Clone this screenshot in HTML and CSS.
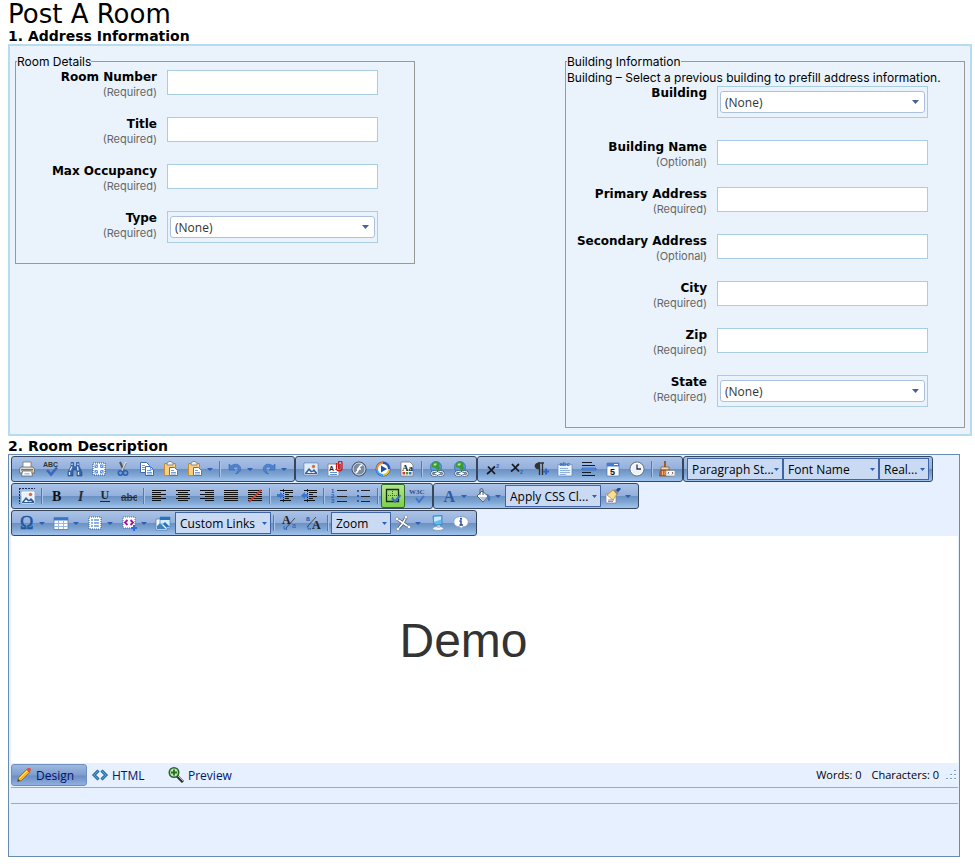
FILE: index.html
```html
<!DOCTYPE html>
<html lang="en">
<head>
<meta charset="utf-8">
<title>Post A Room</title>
<link rel="stylesheet" href="styles.css">
</head>
<body>
<svg class="sprite" aria-hidden="true">
  <symbol id="print" viewBox="0 0 16 16"><path d="M4 1h8v6H4z" fill="#fff" stroke="#777" stroke-width=".8"/><path d="M2 6h12l1.500 2v4H.5V8z" fill="#d9d9d6" stroke="#666" stroke-width=".8"/><path d="M2 8h12v1.500H2z" fill="#777"/><path d="M3.500 10h9l1 5h-11z" fill="#fff" stroke="#666" stroke-width=".8"/><path d="M5.500 12h5v1.500h-5z" fill="#9fc4ea"/><path d="M12 10.500h2" stroke="#e5a521" stroke-width="1.500"/></symbol>
  <symbol id="spell" viewBox="0 0 16 16"><text x="0" y="5.500" font-family="Liberation Sans" font-size="7" font-weight="700" fill="#333">ABC</text><path d="M4 9l4 4.500 6-7" fill="none" stroke="#3c66bd" stroke-width="2.500"/></symbol>
  <symbol id="find" viewBox="0 0 16 16"><path d="M4 1.500h2.500V5L8 6l1.500-1V1.500H12V5l3 6v4h-5V9H6v6H1v-4l3-6z" fill="#3566ad" stroke="#234a86" stroke-width=".6"/><path d="M3 9.500L5 5.500M11 9.500l-.5-4M2.500 11v3M11.500 11v3M5 2.500v1.500M11 2.500v1.500" stroke="#dcebff" stroke-width="1.300"/></symbol>
  <symbol id="selectall" viewBox="0 0 16 16"><path d="M2 2h12v12H2z" fill="#fff" stroke="#1e4e97" stroke-dasharray="1 1"/><path d="M3.500 3.500h3.500v3.500H3.500zM9 3.500h3.500v3.500H9zM3.500 9h3.500v3.500H3.500zM9 9h3.500v3.500H9z" fill="#5f94df"/><path d="M4.500 4.500l2 2M11.500 4.500l-2 2M4.500 11.500l2-2M11.500 11.500l-2-2" stroke="#cfe2fa"/></symbol>
  <symbol id="cut" viewBox="0 0 16 16"><path d="M5 1l4 9" stroke="#555" stroke-width="2"/><path d="M11 1L7 10" stroke="#d8dce5" stroke-width="1.800"/><path d="M11.500 2L8 9" stroke="#666" stroke-width=".7"/><circle cx="5.500" cy="12" r="2.200" fill="none" stroke="#2e5fb0" stroke-width="1.500"/><circle cx="10.500" cy="12" r="2.200" fill="none" stroke="#2e5fb0" stroke-width="1.500"/></symbol>
  <symbol id="copy" viewBox="0 0 16 16"><path d="M1.500 1.500h6l3 3v7h-9z" fill="#fff" stroke="#3d68b5"/><path d="M3 4.500h3M3 6.500h3M3 8.500h3" stroke="#6e9be0"/><path d="M6.500 5.500h5l3 3v6h-8z" fill="#fff" stroke="#3d68b5"/><path d="M11.500 5.500v3h3M8 9.500h4M8 11.500h5M8 13h5" fill="none" stroke="#6e9be0"/></symbol>
  <symbol id="paste" viewBox="0 0 16 16"><path d="M1.500 2.500h11v12h-11z" fill="#f6cf85" stroke="#c98a34"/><path d="M4 4V2l2-1.500h2L10 2v2z" fill="#eee" stroke="#777" stroke-width=".8"/><path d="M6.500 6.500h5l3 3v5h-8z" fill="#fff" stroke="#56779c"/><path d="M8 9.500h3M8 11.500h5M8 13h5" stroke="#7ea0cc"/></symbol>
  <symbol id="undo" viewBox="0 0 16 16"><path d="M2 3v6h6L6 7c3-2 6-.5 5 2.500C10.500 11 9.500 12 8.500 13 12 12.500 14.500 9.500 13.500 6.500 12.500 3 7.500 2 4 5z" fill="#4e83d1" stroke="#3466b5" stroke-width=".6"/></symbol>
  <symbol id="image" viewBox="0 0 16 16"><path d="M1 2h14v12H1z" fill="#fff" stroke="#6383b3" stroke-width=".8"/><path d="M2 3h12v10H2z" fill="#ddecfb"/><path d="M2 12l4-5 3 3 2-2 3 3.500V13H2z" fill="#375f9c"/><path d="M4 12l2-2.500 2 2 3-1 1 1.500z" fill="#f4f8ff"/><circle cx="10.500" cy="5.500" r="1.700" fill="#e86b2a"/></symbol>
  <symbol id="attach" viewBox="0 0 16 16"><path d="M1 3h11v12H1z" fill="#fff" stroke="#889"/><text x="2" y="10" font-family="Liberation Sans" font-size="7" font-weight="700" fill="#222">A</text><path d="M3 11.500h7M3 13.500h7M8 8.500h2" stroke="#5f90d4"/><path d="M9.500 2v5.500c0 3 5.500 3 5.500 0V2c0-2.500-3.500-2.500-3.500 0v5c0 1 1.500 1 1.500 0V3" fill="none" stroke="#cf1717" stroke-width="1.300"/></symbol>
  <symbol id="flash" viewBox="0 0 16 16"><circle cx="8" cy="8" r="7" fill="#7d8ba0" stroke="#39465a"/><circle cx="8" cy="8" r="6" fill="none" stroke="#d5dce8"/><path d="M11.500 4c-5-.5-3 7.500-7 8M6 8h4" fill="none" stroke="#fff" stroke-width="1.600"/></symbol>
  <symbol id="media" viewBox="0 0 16 16"><circle cx="8" cy="8" r="7.500" fill="#2b54b2"/><path d="M8 1A7 7 0 0 0 1 8h3a4 4 0 0 1 4-4z" fill="#ef8a35"/><path d="M15 8a7 7 0 0 1-7 7v-3a4 4 0 0 0 4-4z" fill="#e7c72d"/><path d="M1 8a7 7 0 0 0 7 7v-3a4 4 0 0 1-4-4z" fill="#42a7ea"/><circle cx="8" cy="8" r="5" fill="#fff"/><path d="M6 4.500L12 8l-6 3.500z" fill="#234da8"/></symbol>
  <symbol id="template" viewBox="0 0 16 16"><path d="M2 1h9l3 3v11H2z" fill="#fff" stroke="#777" stroke-width=".8"/><text x="3" y="9.500" font-family="Liberation Serif" font-size="9" font-weight="700" fill="#222">Aa</text><path d="M3.500 11h2.500v2.500H3.500z" fill="#d23535"/><path d="M6.800 11h2.500v2.500H6.800z" fill="#3aa143"/><path d="M10 11h2.500v2.500H10z" fill="#3567c9"/></symbol>
  <symbol id="link" viewBox="0 0 16 16"><circle cx="7" cy="6" r="5.500" fill="#5b9be0" stroke="#2c66a5" stroke-width=".7"/><path d="M3 2.500C5 .5 9 .5 11 2.500L10 5l1.500 2L8.500 11 6.500 7 3 6z" fill="#3b9a38"/><path d="M5 2.500h3L7 4.500H4.500z" fill="#b9ec92"/><rect x="2.500" y="10.500" width="6" height="4" rx="2" fill="none" stroke="#4d5b6d" stroke-width="2"/><rect x="8.500" y="10.500" width="6" height="4" rx="2" fill="none" stroke="#4d5b6d" stroke-width="2"/><rect x="2.500" y="10.500" width="6" height="4" rx="2" fill="none" stroke="#fff"/><rect x="8.500" y="10.500" width="6" height="4" rx="2" fill="none" stroke="#fff"/><path d="M6 12.500h5" stroke="#fff" stroke-width="1.200"/></symbol>
  <symbol id="sup" viewBox="0 0 16 16"><path d="M3 5.500l7 7.500M10 5.500C7 8 6 10 2 13" fill="none" stroke="#171b22" stroke-width="1.800"/><text x="11" y="6.500" font-family="Liberation Sans" font-size="6" font-weight="700" fill="#2861bd">2</text></symbol>
  <symbol id="sub" viewBox="0 0 16 16"><path d="M3 3l7 7.500M10 3C7 5.500 6 8 2 10.500" fill="none" stroke="#171b22" stroke-width="1.800"/><text x="11" y="13" font-family="Liberation Sans" font-size="5" font-weight="700" fill="#2861bd">2</text></symbol>
  <symbol id="para" viewBox="0 0 16 16"><path d="M5 2h6M6.500 2v12M9.500 2v12" stroke="#333" stroke-width="1.300"/><path d="M6.500 1.500v7C0 8.500 0 1.500 6.500 1.500" fill="#333"/><path d="M10 10.500h6M13 7.500v6" stroke="#2e67c9" stroke-width="2"/></symbol>
  <symbol id="abcbox" viewBox="0 0 16 16"><path d="M1 3.500h14v11.500H1z" fill="#edf4ff" stroke="#6084bd" stroke-width=".7"/><text x="2.500" y="5" font-family="Liberation Sans" font-size="6" font-weight="700" fill="#295fac">abc</text><path d="M3 7.500h8M3 9.500h10M3 11.500h10M3 13.500h6" stroke="#8eb0e0"/></symbol>
  <symbol id="hr" viewBox="0 0 16 16"><path d="M1 1.500h10M1 4.500h13M1 11.500h9M1 14.500h13" stroke="#171b22"/><path d="M1 7h14v2H1z" fill="#5f95ed" stroke="#2d62b5" stroke-width=".7"/></symbol>
  <symbol id="date" viewBox="0 0 16 16"><path d="M2 2h12v13H2z" fill="#fff" stroke="#5276ab" stroke-width=".7"/><path d="M2 2h12v3.500H2z" fill="#427bd0"/><path d="M9 3.500h4" stroke="#fff"/><text x="5" y="13.500" font-family="Liberation Sans" font-size="9" font-weight="700" fill="#111">5</text></symbol>
  <symbol id="clock" viewBox="0 0 16 16"><circle cx="8" cy="8" r="7" fill="#edf2f8" stroke="#626c7b"/><circle cx="8" cy="8" r="5.800" fill="none" stroke="#fff"/><path d="M8 3.500V8h4" fill="none" stroke="#2c374b" stroke-width="1.300"/></symbol>
  <symbol id="clean" viewBox="0 0 16 16"><path d="M5 0h2v6H5z" fill="#a65826"/><path d="M2 6h8v3H2z" fill="#f3d9ae" stroke="#935122" stroke-width=".7"/><path d="M1.500 9h9l1 6H.5z" fill="#bb673a" stroke="#833e1e" stroke-width=".7"/><path d="M3.500 10v4M6 10v4M8 10v4" stroke="#efb878"/><path d="M7 9.500h9V15H7z" fill="#fff" stroke="#888" stroke-width=".7"/><path d="M10 11l-1 1.200 1 1.200M13 11l1 1.200-1 1.200" fill="none" stroke="#333" stroke-width=".8"/></symbol>
  <symbol id="manager" viewBox="0 0 16 16"><path d="M0 .5h16M.5 0v16" stroke="#14305f" stroke-dasharray="2 1"/><path d="M3 4h12v11H3z" fill="#e5f1fe" stroke="#fff"/><path d="M3 14l4-5 3 3 2-2 3 3v2H3z" fill="#345b9a"/><path d="M5 14l2-2.500 2 2 3-.5 1 1z" fill="#f4f8ff"/><circle cx="11.500" cy="6.500" r="1.700" fill="#e86b2a"/></symbol>
  <symbol id="bold" viewBox="0 0 16 16"><text x="3" y="12.500" font-family="Liberation Serif" font-size="14" font-weight="700" fill="#111">B</text></symbol>
  <symbol id="italic" viewBox="0 0 16 16"><text x="5" y="12.500" font-family="Liberation Serif" font-size="14" font-style="italic" font-weight="700" fill="#292d36">I</text></symbol>
  <symbol id="underline" viewBox="0 0 16 16"><text x="3.500" y="11" font-family="Liberation Serif" font-size="12" font-weight="700" fill="#202631">U</text><path d="M3 13.500h10" stroke="#202631"/></symbol>
  <symbol id="strike" viewBox="0 0 16 16"><text x="0" y="13" font-family="Liberation Sans" font-size="10" font-weight="700" fill="#3a4149">abc</text><path d="M0 9.500h16" stroke="#252b34"/></symbol>
  <symbol id="left" viewBox="0 0 16 16"><path d="M1 2.500h14M1 4.500h9M1 6.500h14M1 8.500h9M1 10.500h14M1 12.500h9" stroke="#111"/></symbol>
  <symbol id="center" viewBox="0 0 16 16"><path d="M1 2.500h14M3 4.500h10M1 6.500h14M3 8.500h10M1 10.500h14M3 12.500h10" stroke="#111"/></symbol>
  <symbol id="right" viewBox="0 0 16 16"><path d="M1 2.500h14M6 4.500h9M1 6.500h14M6 8.500h9M1 10.500h14M6 12.500h9" stroke="#111"/></symbol>
  <symbol id="justify" viewBox="0 0 16 16"><path d="M1 2.500h14M1 4.500h14M1 6.500h14M1 8.500h14M1 10.500h14M1 12.500h14" stroke="#111"/></symbol>
  <symbol id="noalign" viewBox="0 0 16 16"><path d="M1 2.500h14M1 4.500h14M1 6.500h14M1 8.500h14M1 10.500h14M1 12.500h14" stroke="#111"/><path d="M2 14L14 2" stroke="#e43622" stroke-width="1.800"/></symbol>
  <symbol id="indent" viewBox="0 0 16 16"><path d="M3 2.500h13M8 4.500h8M8 6.500h4M8 8.500h8M8 10.500h4M3 12.500h11" stroke="#111"/><path d="M6.500 1v14" stroke="#222" stroke-dasharray="1 1"/><path d="M0 6h3V4l4 3.500L3 11V9H0z" fill="#3a75cd"/></symbol>
  <symbol id="outdent" viewBox="0 0 16 16"><path d="M3 2.500h13M8 4.500h8M8 6.500h4M8 8.500h8M8 10.500h4M3 12.500h11" stroke="#111"/><path d="M6.500 1v14" stroke="#222" stroke-dasharray="1 1"/><path d="M7 6H4V4L0 7.500 4 11V9h3z" fill="#3a75cd"/></symbol>
  <symbol id="ol" viewBox="0 0 16 16"><path d="M6 2.500h10M6 8.500h10M6 13.500h10" stroke="#222"/><text font-family="Liberation Sans" font-size="6" font-weight="700" fill="#285fb7"><tspan x="0" y="5">1</tspan><tspan x="0" y="10">2</tspan><tspan x="0" y="15">3</tspan></text></symbol>
  <symbol id="ul" viewBox="0 0 16 16"><path d="M6 2.500h9M6 8.500h9M6 13.500h9" stroke="#222"/><path d="M2 2h2v2H2zM2 7h2v2H2zM2 12h2v2H2z" fill="#285fb7"/></symbol>
  <symbol id="border" viewBox="0 0 16 16"><path d="M1.500 1.500h12v12h-12z" fill="none" stroke="#172d17" stroke-width="1.300"/><path d="M7.500 3v10M3 7.500h10" stroke="#385c32" stroke-dasharray="1 1"/><path d="M7 10l3 3.500L15.500 7" fill="none" stroke="#406ec1" stroke-width="2.200"/></symbol>
  <symbol id="w3c" viewBox="0 0 16 16"><text x="0" y="6" font-family="Liberation Serif" font-size="7" font-weight="700" fill="#294d8b">W3C</text><path d="M7 10l3 4 5-6" fill="none" stroke="#4275cd" stroke-width="2"/></symbol>
  <symbol id="color" viewBox="0 0 16 16"><text x="2.500" y="13.500" font-family="Liberation Serif" font-size="16" font-weight="700" fill="#2c5baa">A</text></symbol>
  <symbol id="bucket" viewBox="0 0 16 16"><path d="M2 8l5-5 6 5-5 6z" fill="#fff" stroke="#4f5f79"/><path d="M4 9h8l-4 4z" fill="#b9c6da"/><path d="M5 7V2c0-2 3-2 3 0v5" fill="none" stroke="#4f5f79"/><path d="M12 6c4 1 4 7 2 7s-1-4-2-7" fill="#3a76d1"/></symbol>
  <symbol id="format" viewBox="0 0 16 16"><path d="M1 6h10v9H1z" fill="#fff" stroke="#879" stroke-width=".7"/><path d="M3 12h6M3 13.500h5" stroke="#88a"/><path d="M2 7l6-5 4 4-4 6z" fill="#f7df91" stroke="#b97d27" stroke-width=".7"/><path d="M8 2l3-1 3 3-2 3z" fill="#888d9a"/><path d="M12 3l3-3" stroke="#244f98" stroke-width="3"/></symbol>
  <symbol id="omega" viewBox="0 0 16 16"><text x="1" y="14" font-family="Liberation Serif" font-size="18" fill="#2254a0" stroke="#2254a0" stroke-width=".5">Ω</text></symbol>
  <symbol id="table" viewBox="0 0 16 16"><path d="M1 2.500h14v12H1z" fill="#fff" stroke="#5579af" stroke-width=".8"/><path d="M1 2.500h14v3H1z" fill="#3976ca"/><path d="M1 8.500h14M1 11.500h14M5.500 5v9M10.500 5v9" stroke="#9bb9e2"/></symbol>
  <symbol id="formlist" viewBox="0 0 16 16"><path d="M2 2h12v12H2z" fill="#fff" stroke="#315f9f" stroke-dasharray="1 1"/><path d="M4 5h2M4 8h2M4 11h2M7 5h5M7 8h5M7 11h5" stroke="#6699d4" stroke-width="1.500"/></symbol>
  <symbol id="snippet" viewBox="0 0 16 16"><path d="M2 2h12v11H2z" fill="#fff" stroke="#416eaa" stroke-dasharray="1 1"/><path d="M6.500 5L4 7.500 6.500 10M9.500 5L12 7.500 9.500 10" fill="none" stroke="#a0149a" stroke-width="1.800"/><path d="M10 13h6M13 10v6" stroke="#2f6cd2" stroke-width="2"/></symbol>
  <symbol id="map" viewBox="0 0 16 16"><path d="M1 4h11v11H1z" fill="#f5fbff" stroke="#567eae" stroke-width=".8"/><path d="M2 11l3-3 6 6H2z" fill="#3e83bf"/><path d="M5 2h10v11h-3l-3-4H5z" fill="#d5eeff" stroke="#568ac3" stroke-width=".8"/><path d="M5 2h10v3H5zM8 9l2-2 5 5H11z" fill="#2874bc"/></symbol>
  <symbol id="lower" viewBox="0 0 16 16"><text x="1" y="9" font-family="Liberation Serif" font-size="12" font-weight="700" fill="#222">A</text><text x="11" y="13" font-family="Liberation Sans" font-size="7" fill="#285fb7">a</text><path d="M5 13L14 3" stroke="#333" stroke-width=".8"/><path d="M3 11v3h3l-1-1M5 15l1-1" fill="none" stroke="#3567b5"/></symbol>
  <symbol id="upper" viewBox="0 0 16 16"><text x="1" y="6" font-family="Liberation Sans" font-size="7" font-weight="700" fill="#285fb7">a</text><text x="7" y="14" font-family="Liberation Serif" font-size="12" font-weight="700" fill="#222">A</text><path d="M2 12L11 2" stroke="#333" stroke-width=".8"/><path d="M3 11v3h3l-1-1" fill="none" stroke="#3567b5"/></symbol>
  <symbol id="modules" viewBox="0 0 16 16"><path d="M2 4l6 4 3-6M8 8l-5 6M8 8l6 4" fill="none" stroke="#4d596b" stroke-width="3"/><path d="M2 4l6 4 3-6M8 8l-5 6M8 8l6 4" fill="none" stroke="#fff" stroke-width="1.600"/><g fill="#f7f9ff" stroke="#66748a" stroke-width=".5"><circle cx="2" cy="4" r="1.700"/><circle cx="11" cy="2" r="1.700"/><circle cx="3" cy="14" r="1.700"/><circle cx="14" cy="12" r="1.700"/></g></symbol>
  <symbol id="screen" viewBox="0 0 16 16"><ellipse cx="9" cy="13.500" rx="5.500" ry="2" fill="#f2f6fa" stroke="#7892aa" stroke-width=".7"/><path d="M8 9h3v4H8z" fill="#b8ccdd"/><path d="M4 1l9-.5v9L5 10z" fill="#62bdee" stroke="#327dba" stroke-width=".8"/><path d="M5 2l7-.5v3L5 7z" fill="#c5eafc"/></symbol>
  <symbol id="about" viewBox="0 0 16 16"><path d="M8 1.500c9.500 0 9.500 10.500 1.500 10.500L8 15l-1-3C-1.500 12-1.500 1.500 8 1.500" fill="#fff" stroke="#8aa0be"/><path d="M6.500 6H8v4M6.500 10h3.500" fill="none" stroke="#1f4894" stroke-width="1.400"/><circle cx="8" cy="3.800" r="1.100" fill="#1f4894"/></symbol>
  <symbol id="pencil" viewBox="0 0 16 16"><path d="M1.500 14.500l1-4 8-8 3 3-8 8z" fill="#f5b72c" stroke="#8b5a17" stroke-width=".7"/><path d="M3.500 11.500l8-8" stroke="#ffe584"/><path d="M10.500 2.500l1.500-1.500h2l1 1-.5 2-1 1.500z" fill="#df4e49"/><path d="M1.500 14.500l.7-2.500 1.800 1.800z" fill="#443b30"/></symbol>
  <symbol id="code" viewBox="0 0 16 16"><path d="M6.500 3.500L2 8l4.500 4.500M9.500 3.500L14 8l-4.500 4.500" fill="none" stroke="#174f80" stroke-width="3"/><path d="M6.500 3.500L2 8l4.500 4.500M9.500 3.500L14 8l-4.500 4.500" fill="none" stroke="#4ba6df" stroke-width="1.300"/></symbol>
  <symbol id="zoomin" viewBox="0 0 16 16"><path d="M9 9l6 6" stroke="#2b3135" stroke-width="3"/><path d="M10 9l5 5" stroke="#b5b8bb"/><circle cx="6" cy="5.500" r="4.700" fill="#c0e8b0" stroke="#27632b" stroke-width="1.600"/><path d="M3 5.500h6M6 2.500v6" stroke="#246f29" stroke-width="1.800"/></symbol>
</svg>

<h1 class="page-title">Post A Room</h1>

<h2 class="section-title">1. Address Information</h2>
<form class="address">
  <fieldset class="group">
    <legend>Room Details</legend>
    <div class="field"><label for="room-number">Room Number <small>(Required)</small></label><input type="text" id="room-number"></div>
    <div class="field"><label for="title">Title <small>(Required)</small></label><input type="text" id="title"></div>
    <div class="field"><label for="occupancy">Max Occupancy <small>(Required)</small></label><input type="text" id="occupancy"></div>
    <div class="field"><label for="type">Type <small>(Required)</small></label><div class="picker"><select id="type"><option>(None)</option></select></div></div>
  </fieldset>
  <fieldset class="group">
    <legend>Building Information</legend>
    <p class="hint">Building – Select a previous building to prefill address information.</p>
    <div class="field"><label for="building">Building</label><div class="picker"><select id="building"><option>(None)</option></select></div></div>
    <div class="field"><label for="building-name">Building Name <small>(Optional)</small></label><input type="text" id="building-name"></div>
    <div class="field"><label for="primary">Primary Address <small>(Required)</small></label><input type="text" id="primary"></div>
    <div class="field"><label for="secondary">Secondary Address <small>(Optional)</small></label><input type="text" id="secondary"></div>
    <div class="field"><label for="city">City <small>(Required)</small></label><input type="text" id="city"></div>
    <div class="field"><label for="zip">Zip <small>(Required)</small></label><input type="text" id="zip"></div>
    <div class="field"><label for="state">State <small>(Required)</small></label><div class="picker"><select id="state"><option>(None)</option></select></div></div>
  </fieldset>
</form>

<h2 class="section-title">2. Room Description</h2>
<section class="editor">
  <div class="toolbars">
    <div class="toolrow">
      <div class="toolbar">
        <button class="tool" aria-label="Print"><svg><use href="#print"/></svg></button>
        <button class="tool" aria-label="Spell check"><svg><use href="#spell"/></svg></button>
        <button class="tool" aria-label="Find"><svg><use href="#find"/></svg></button>
        <button class="tool" aria-label="Select all"><svg><use href="#selectall"/></svg></button>
        <button class="tool" aria-label="Cut"><svg><use href="#cut"/></svg></button>
        <button class="tool" aria-label="Copy"><svg><use href="#copy"/></svg></button>
        <button class="tool" aria-label="Paste"><svg><use href="#paste"/></svg></button>
        <button class="tool split" aria-label="Paste options"><svg><use href="#paste"/></svg></button>
        <span class="sep"></span>
        <button class="tool split" aria-label="Undo"><svg><use href="#undo"/></svg></button>
        <button class="tool split" aria-label="Redo"><svg class="flip"><use href="#undo"/></svg></button>
      </div>
      <div class="toolbar">
        <button class="tool" aria-label="Image"><svg><use href="#image"/></svg></button>
        <button class="tool" aria-label="Document"><svg><use href="#attach"/></svg></button>
        <button class="tool" aria-label="Flash"><svg><use href="#flash"/></svg></button>
        <button class="tool" aria-label="Media"><svg><use href="#media"/></svg></button>
        <button class="tool" aria-label="Template"><svg><use href="#template"/></svg></button>
        <span class="sep"></span>
        <button class="tool" aria-label="Link"><svg><use href="#link"/></svg></button>
        <button class="tool" aria-label="Remove link"><svg><use href="#link"/></svg></button>
      </div>
      <div class="toolbar">
        <button class="tool" aria-label="Superscript"><svg><use href="#sup"/></svg></button>
        <button class="tool" aria-label="Subscript"><svg><use href="#sub"/></svg></button>
        <button class="tool" aria-label="New paragraph"><svg><use href="#para"/></svg></button>
        <button class="tool" aria-label="Group box"><svg><use href="#abcbox"/></svg></button>
        <button class="tool" aria-label="Horizontal rule"><svg><use href="#hr"/></svg></button>
        <button class="tool" aria-label="Date"><svg><use href="#date"/></svg></button>
        <button class="tool" aria-label="Time"><svg><use href="#clock"/></svg></button>
        <span class="sep"></span>
        <button class="tool" aria-label="Strip formatting"><svg><use href="#clean"/></svg></button>
      </div>
      <div class="toolbar">
        <select class="combo" aria-label="Paragraph style"><option>Paragraph St...</option></select>
        <select class="combo" aria-label="Font name"><option>Font Name</option></select>
        <select class="combo combo-small" aria-label="Font size"><option>Real...</option></select>
      </div>
    </div>
    <div class="toolrow">
      <div class="toolbar">
        <button class="tool" aria-label="Absolute position"><svg><use href="#manager"/></svg></button>
        <span class="sep"></span>
        <button class="tool" aria-label="Bold"><svg><use href="#bold"/></svg></button>
        <button class="tool" aria-label="Italic"><svg><use href="#italic"/></svg></button>
        <button class="tool" aria-label="Underline"><svg><use href="#underline"/></svg></button>
        <button class="tool" aria-label="Strikethrough"><svg><use href="#strike"/></svg></button>
        <span class="sep"></span>
        <button class="tool" aria-label="Align left"><svg><use href="#left"/></svg></button>
        <button class="tool" aria-label="Align center"><svg><use href="#center"/></svg></button>
        <button class="tool" aria-label="Align right"><svg><use href="#right"/></svg></button>
        <button class="tool" aria-label="Justify"><svg><use href="#justify"/></svg></button>
        <button class="tool" aria-label="Remove alignment"><svg><use href="#noalign"/></svg></button>
        <span class="sep"></span>
        <button class="tool" aria-label="Indent"><svg><use href="#indent"/></svg></button>
        <button class="tool" aria-label="Outdent"><svg><use href="#outdent"/></svg></button>
        <span class="sep"></span>
        <button class="tool" aria-label="Numbered list"><svg><use href="#ol"/></svg></button>
        <button class="tool" aria-label="Bullet list"><svg><use href="#ul"/></svg></button>
        <span class="sep"></span>
        <button class="tool tool-on" aria-label="Show table borders" aria-pressed="true"><svg><use href="#border"/></svg></button>
        <button class="tool" aria-label="Validate"><svg><use href="#w3c"/></svg></button>
      </div>
      <div class="toolbar">
        <button class="tool split" aria-label="Text color"><svg><use href="#color"/></svg></button>
        <button class="tool split" aria-label="Background color"><svg><use href="#bucket"/></svg></button>
        <select class="combo" aria-label="CSS class"><option>Apply CSS Cl...</option></select>
        <button class="tool split" aria-label="Format painter"><svg><use href="#format"/></svg></button>
      </div>
    </div>
    <div class="toolrow">
      <div class="toolbar">
        <button class="tool split" aria-label="Symbol"><svg><use href="#omega"/></svg></button>
        <button class="tool split" aria-label="Table"><svg><use href="#table"/></svg></button>
        <button class="tool split" aria-label="Form element"><svg><use href="#formlist"/></svg></button>
        <button class="tool split" aria-label="Code snippet"><svg><use href="#snippet"/></svg></button>
        <button class="tool" aria-label="Image map"><svg><use href="#map"/></svg></button>
        <select class="combo" aria-label="Custom links"><option>Custom Links</option></select>
        <span class="sep"></span>
        <button class="tool" aria-label="Lower case"><svg><use href="#lower"/></svg></button>
        <button class="tool" aria-label="Upper case"><svg><use href="#upper"/></svg></button>
        <span class="sep"></span>
        <select class="combo combo-medium" aria-label="Zoom"><option>Zoom</option></select>
        <button class="tool split" aria-label="Modules"><svg><use href="#modules"/></svg></button>
        <button class="tool" aria-label="Full screen"><svg><use href="#screen"/></svg></button>
        <button class="tool" aria-label="About"><svg><use href="#about"/></svg></button>
      </div>
    </div>
  </div>
  <div class="canvas"><span>Demo</span></div>
  <div class="status">
    <button class="mode mode-on"><svg><use href="#pencil"/></svg>Design</button>
    <button class="mode"><svg><use href="#code"/></svg>HTML</button>
    <button class="mode"><svg><use href="#zoomin"/></svg>Preview</button>
    <p class="counts"><span>Words: 0</span><span>Characters: 0</span></p>
    <svg class="grip" viewBox="0 0 12 12" aria-hidden="true"><path d="M9 1h2v2H9zM5 5h2v2H5zM9 5h2v2H9zM1 9h2v2H1zM5 9h2v2H5zM9 9h2v2H9z" fill="#fff"/><path d="M9 1h2v1H9zM5 5h2v1H5zM9 5h2v1H9zM1 9h2v1H1zM5 9h2v1H5zM9 9h2v1H9z" fill="#7f9bc9"/></svg>
  </div>
  <div class="path"></div>
</section>
</body>
</html>
```
FILE: styles.css
```css
* { box-sizing: border-box; }

body {
  margin: 0 3px 0 8px;
  background: #fff;
  color: #000;
  font-family: "DejaVu Sans", sans-serif;
  font-size: 12px;
  line-height: 16px;
}

.sprite { display: none; }

.page-title {
  margin: 0;
  font-size: 26px;
  font-weight: 400;
  line-height: 28px;
}

.section-title {
  margin: 0;
  font-size: 14px;
  font-weight: 700;
  line-height: 16px;
}

.address {
  display: flex;
  justify-content: space-between;
  align-items: flex-start;
  margin-bottom: 2px;
  padding: 6px 5px;
  background: #eaf3fb;
  border: 2px solid #b5dcf1;
}

.group {
  flex: 0 1 400px;
  min-width: 0;
  margin: 0;
  padding: 0 1px;
  border: 1px solid #999;
}

.group legend {
  padding: 2px 0 0;
}

.group legend,
.hint {
  font-family: "Inter", sans-serif;
}

.hint { margin: 0; }

.field {
  display: flex;
  align-items: flex-start;
  gap: 10px;
  padding-right: 35px;
}

.field label {
  flex: 1;
  font-weight: 700;
  line-height: 15px;
  text-align: right;
}

.field small {
  display: block;
  color: #666;
  font-family: "Inter", sans-serif;
  font-size: 11px;
  font-weight: 400;
}

.field input,
.picker {
  width: 211px;
  margin-bottom: 22px;
  border: 1px solid #a9cde2;
}

.field input {
  height: 25px;
  padding: 0 4px;
  background: #fff;
}

.picker {
  height: 32px;
  padding: 4px 2px;
}

.field:last-child .picker { margin-bottom: 20px; }

select,
button {
  margin: 0;
  font-family: "Open Sans", sans-serif;
  font-size: 12px;
}

select {
  appearance: none;
  background-repeat: no-repeat;
}

.picker select {
  display: block;
  width: 100%;
  height: 22px;
  padding: 0 4px;
  border: 1px solid #abc1de;
  border-radius: 3px;
  background-color: #fff;
  background-image: url("data:image/svg+xml,%3Csvg xmlns='http://www.w3.org/2000/svg' width='7' height='4'%3E%3Cpath d='M0 0h7L3.5 4z' fill='%234a5fa0'/%3E%3C/svg%3E");
  background-position: right 5px center;
  color: #333;
}

.editor {
  margin-right: 12px;
  padding: 1px 1px 52px 2px;
  background: #e7f0ff;
  border: 1px solid #688caf;
}

.toolbars {
  display: flex;
  flex-direction: column;
  gap: 1px;
}

.toolrow { display: flex; }

.toolbar {
  display: flex;
  align-items: center;
  height: 26px;
  padding: 0 3px;
  border: 1px solid #36465e;
  border-radius: 3px;
  background: linear-gradient(#abc3e6 0, #94b0dc 48%, #6b92c3 52%, #7fa5d2 75%, #a0c4ee 100%);
}

.tool {
  display: flex;
  align-items: center;
  justify-content: center;
  width: 24px;
  height: 22px;
  padding: 0;
  border: 0;
  background: none;
}

.tool svg {
  flex: none;
  width: 16px;
  height: 16px;
}

.tool .flip { transform: scaleX(-1); }

.split {
  justify-content: flex-start;
  width: 34px;
  padding-left: 4px;
}

.split::after {
  content: "";
  margin-left: 4px;
  border: 3px solid transparent;
  border-top-color: #2f5fb3;
  border-bottom: 0;
}

.tool-on {
  height: 24px;
  border: 1px solid #2d6b26;
  border-radius: 2px;
  background: linear-gradient(#b5e58c, #7ecf4c);
}

.sep {
  width: 2px;
  height: 16px;
  margin: 0 2px;
  border-left: 1px solid #5778a9;
  border-right: 1px solid #a9c4e8;
}

.combo {
  width: 96px;
  height: 22px;
  padding: 0 4px;
  border: 1px solid #3f65a8;
  border-radius: 0;
  background-color: #cbdaf3;
  background-image: url("data:image/svg+xml,%3Csvg xmlns='http://www.w3.org/2000/svg' width='5' height='3'%3E%3Cpath d='M0 0h5L2.500 3z' fill='%232f5fb3'/%3E%3C/svg%3E");
  background-position: right 3px center;
  color: #000;
}

.combo-small { width: 50px; }

.combo-medium { width: 60px; }

.canvas {
  display: flex;
  align-items: center;
  justify-content: center;
  min-height: 227px;
  padding: 0 42px 18px 0;
  background: #fff;
  color: #333;
  font-family: "Liberation Sans", sans-serif;
  font-size: 48px;
}

.status {
  display: flex;
  align-items: center;
  height: 25px;
  padding-right: 1px;
  border-bottom: 1px solid #93abcd;
}

.mode {
  display: flex;
  align-items: center;
  gap: 4px;
  min-width: 76px;
  height: 22px;
  padding: 0 4px;
  border: 1px solid transparent;
  border-radius: 3px;
  background: none;
  color: #00156e;
}

.mode svg {
  width: 16px;
  height: 16px;
}

.mode-on {
  border-color: #6f8fc0;
  background: linear-gradient(#9db9df, #7f9dd0 50%, #6c8cc3 55%, #8fb0de);
}

.counts {
  display: flex;
  gap: 10px;
  margin: 0 6px 0 auto;
  font-family: "Open Sans", sans-serif;
  font-size: 11px;
}

.grip {
  width: 12px;
  height: 12px;
}

.path {
  height: 16px;
  border-bottom: 1px solid #93abcd;
}
```
